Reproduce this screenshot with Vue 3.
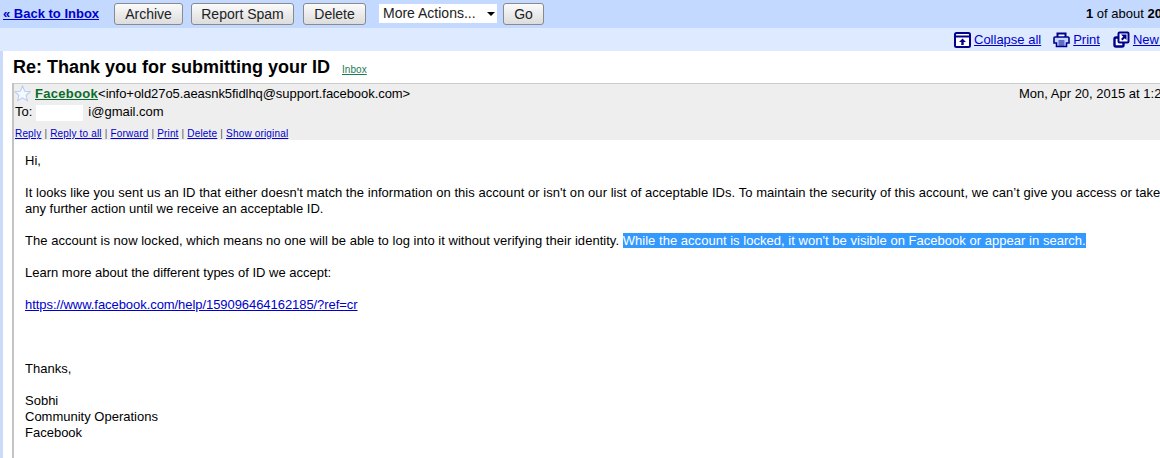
<script setup>
const actions = ['Reply', 'Reply to all', 'Forward', 'Print', 'Delete', 'Show original']
</script>

<template>
  <div class="page">
    <div class="toolbar">
      <a class="back" href="#">« Back to Inbox</a>
      <button class="btn archive">Archive</button>
      <button class="btn spam">Report Spam</button>
      <button class="btn delete">Delete</button>
      <div class="select">More Actions...<span class="caret"></span></div>
      <button class="btn go">Go</button>
      <div class="count"><b>1</b> of about <b>20</b></div>
    </div>
    <div class="subbar">
      <svg class="icon" width="17" height="17" viewBox="0 0 17 17">
        <rect x="1" y="2" width="15" height="14" rx="1.500" fill="#fff" stroke="#00008b" stroke-width="2" />
        <path d="M1 5.500h15" stroke="#00008b" stroke-width="2" />
        <path d="M8.500 7.500l3.500 3.500H9.700v3H7.300v-3H5z" fill="#00008b" />
      </svg>
      <a href="#" class="sublink collapse">Collapse all</a>
      <svg class="icon" width="17" height="17" viewBox="0 0 17 17">
        <path d="M4.500 6V2.500h8V6" fill="#fff" stroke="#00008b" stroke-width="2" />
        <path d="M2 6h13a1 1 0 0 1 1 1v5h-2.500v3.500h-10V12H1V7a1 1 0 0 1 1-1z" fill="#c3d9ff" stroke="#00008b" stroke-width="1.600" />
        <path d="M5.500 10h6M5.500 12h6M5.500 14h6" stroke="#00008b" />
      </svg>
      <a href="#" class="sublink print">Print</a>
      <svg class="icon" width="17" height="17" viewBox="0 0 17 17">
        <rect x="1.500" y="6.500" width="9" height="9" rx="1.500" fill="#fff" stroke="#00008b" stroke-width="2.400" />
        <rect x="5.500" y="1.500" width="10" height="10" rx="1" fill="#fff" stroke="#00008b" stroke-width="2" />
        <path d="M8 3.500h5.500V9l-1.800-1.800-2.200 2.200L8 8l2.200-2.200z" fill="#00008b" />
      </svg>
      <a href="#" class="sublink">New window</a>
    </div>
    <div class="content">
      <div class="subject">
        <h1>Re: Thank you for submitting your ID</h1>
        <a href="#" class="label">Inbox</a>
      </div>
      <div class="message">
        <div class="head">
          <div class="from-row">
            <svg class="star" width="17" height="17" viewBox="0 0 16 16">
              <path d="M8 1l2.100 4.800 5.200.5-3.900 3.400 1.200 5.100L8 12.100l-4.600 2.700 1.200-5.100L.7 6.300l5.200-.5z" fill="#f4f8ff" stroke="#b9cdf0" />
            </svg>
            <span class="sender">Facebook</span><span class="email">&lt;info+old27o5.aeasnk5fidlhq@support.facebook.com&gt;</span>
            <span class="date">Mon, Apr 20, 2015 at 1:27 PM</span>
          </div>
          <div class="to-row">To:<span class="redact"></span>i@gmail.com</div>
          <div class="actions">
            <template v-for="(a, i) in actions" :key="a">
              <span v-if="i" class="sep">|</span>
              <a href="#">{{ a }}</a>
            </template>
          </div>
        </div>
        <div class="body">
          <p>Hi,</p>
          <p><span class="wide">It looks like you sent us an ID that either doesn't match the information on this account or isn't on our list of acceptable IDs. To maintain the security of this account, we can’t give you access or take</span><br>any further action until we receive an acceptable ID.</p>
          <p class="locked">The account is now locked, which means no one will be able to log into it without verifying their identity. <span class="hl">While the account is locked, it won't be visible on Facebook or appear in search.</span></p>
          <p>Learn more about the different types of ID we accept:</p>
          <p><a href="#" class="url">https://www.facebook.com/help/159096464162185/?ref=cr</a></p>
          <p class="thanks">Thanks,</p>
          <p>Sobhi<br>Community Operations<br>Facebook</p>
        </div>
      </div>
    </div>
  </div>
</template>

<style scoped>
.page {
  width: 1160px;
  height: 458px;
  overflow: hidden;
  background: #fff;
  font-family: "Liberation Sans", Arial, sans-serif;
  font-size: 13px;
  color: #000;
  white-space: nowrap;
}

.toolbar {
  height: 28px;
  background: #c3d9ff;
  display: flex;
  align-items: center;
  padding: 0 0 1px 3px;
  box-sizing: border-box;
}

.back {
  color: #0000cc;
  font-weight: bold;
  width: 111px;
}

.btn {
  height: 22px;
  padding: 0;
  border: 1px solid #8a8a8a;
  border-radius: 3px;
  background: linear-gradient(#fbfbfb, #dcdcdc);
  font: 14px "Liberation Sans", Arial, sans-serif;
  color: #222;
}
.archive { width: 69px; margin-right: 8px; }
.spam { width: 103px; margin-right: 9px; }
.delete { width: 63px; margin-right: 13px; }
.go { width: 41px; }

.select {
  width: 118px;
  height: 19px;
  line-height: 19px;
  background: #fff;
  padding-left: 4px;
  margin-right: 6px;
  box-sizing: border-box;
  font-size: 14px;
  color: #222;
  position: relative;
}
.caret {
  position: absolute;
  right: 2px;
  top: 8px;
  border: 4px solid transparent;
  border-top: 4px solid #000;
  border-bottom: 0;
}

.count {
  margin-left: auto;
  font-size: 13px;
  width: 74px;
}

.subbar {
  height: 23px;
  background: #deeaff;
  display: flex;
  align-items: center;
  padding-left: 954px;
  box-sizing: border-box;
  font-size: 13px;
}
.sublink { color: #0000cc; margin-left: 3px; }
.collapse { margin-right: 12px; }
.print { margin-right: 13px; }
.icon { flex: none; }

.content {
  border-left: 3px solid #c9dbf8;
  height: 407px;
}

.subject {
  height: 32px;
  display: flex;
  align-items: center;
  padding-left: 10px;
}
.subject h1 {
  margin: 0;
  font-size: 18px;
  font-weight: bold;
}
.label {
  color: #1d7a55;
  font-size: 10px;
  margin-left: 12px;
  margin-top: 4px;
  letter-spacing: 0.05px;
}

.message {
  margin-left: 9px;
  border-left: 2px solid #c4c4c4;
  height: 375px;
}

.head {
  background: #eee;
  border-top: 1px solid #ccc;
  height: 56px;
}
.from-row {
  height: 19px;
  display: flex;
  align-items: center;
  position: relative;
}
.star { margin-right: 4px; flex: none; }
.sender {
  color: #0b6b2c;
  font-weight: bold;
  text-decoration: underline;
  letter-spacing: 0.3px;
}
.email { letter-spacing: -0.06px; }
.date {
  position: absolute;
  left: 1005px;
}
.to-row {
  height: 18px;
  line-height: 18px;
  padding-left: 1px;
}
.redact {
  display: inline-block;
  width: 47px;
  height: 16px;
  margin-left: 4px;
  margin-right: 5px;
  background: #fff;
  vertical-align: middle;
}
.actions {
  margin-top: 7px;
  padding-left: 1px;
  font-size: 10px;
  line-height: 12px;
  color: #555;
  letter-spacing: 0.17px;
}
.actions a { color: #0000cc; }
.sep { margin: 0 3px; }

.body {
  padding: 13px 0 0 11px;
  line-height: 16px;
}
.body p { margin: 0 0 16px; }
.body a { color: #0000cc; }
.wide { letter-spacing: 0.045px; }
.locked { letter-spacing: 0.03px; }
.url { letter-spacing: -0.06px; }
.hl { background: #3399ff; color: #fff; }
.thanks { margin-top: 48px !important; }
</style>

<style>
html, body { margin: 0; overflow: hidden; }
</style>
